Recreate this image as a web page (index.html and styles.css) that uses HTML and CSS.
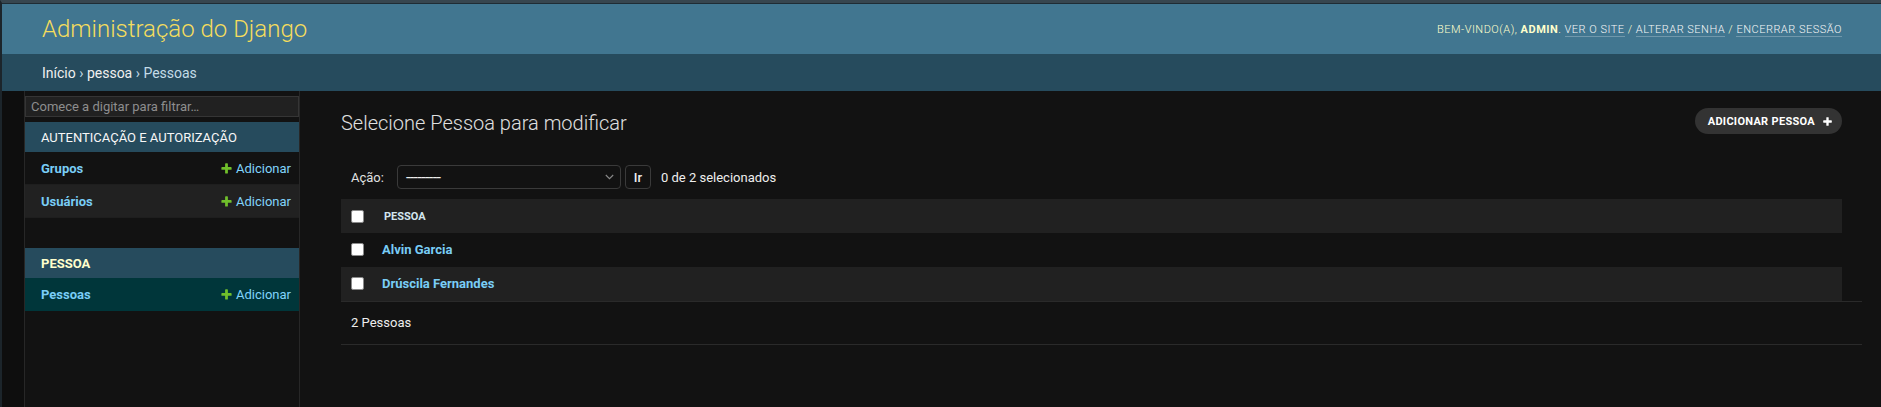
FILE: index.html
```html
<!DOCTYPE html>
<html lang="pt-br">
<head>
<meta charset="utf-8">
<title>Selecione Pessoa para modificar | Administração do Django</title>
<link rel="stylesheet" href="styles.css">
</head>
<body>
<div class="frame">
  <header class="header">
    <div class="branding"><h1 class="site-name">Administração do Django</h1></div>
    <div class="user-tools">Bem-vindo(a), <strong>admin</strong>. <a href="#">Ver o site</a> / <a href="#">Alterar senha</a> / <a href="#">Encerrar sessão</a></div>
  </header>
  <nav class="breadcrumbs"><a href="#">Início</a>&nbsp;›&nbsp;<a href="#">pessoa</a>&nbsp;›&nbsp;Pessoas</nav>
  <div class="main">
    <button class="toggle-nav" aria-label="Alternar navegação"></button>
    <aside class="sidebar">
      <input class="nav-filter" type="search" placeholder="Comece a digitar para filtrar…">
      <div class="app-module">
        <div class="caption"><a href="#">Autenticação e Autorização</a></div>
        <div class="model-row"><a class="model-link" href="#">Grupos</a><a class="addlink" href="#"><svg width="13" height="13" viewBox="0 0 1792 1792"><path fill="#70bf2b" d="M1600 796v192q0 40-28 68t-68 28h-416v416q0 40-28 68t-68 28h-192q-40 0-68-28t-28-68v-416h-416q-40 0-68-28t-28-68v-192q0-40 28-68t68-28h416v-416q0-40 28-68t68-28h192q40 0 68 28t28 68v416h416q40 0 68 28t28 68z"/></svg>Adicionar</a></div>
        <div class="model-row alt"><a class="model-link" href="#">Usuários</a><a class="addlink" href="#"><svg width="13" height="13" viewBox="0 0 1792 1792"><path fill="#70bf2b" d="M1600 796v192q0 40-28 68t-68 28h-416v416q0 40-28 68t-68 28h-192q-40 0-68-28t-28-68v-416h-416q-40 0-68-28t-28-68v-192q0-40 28-68t68-28h416v-416q0-40 28-68t68-28h192q40 0 68 28t28 68v416h416q40 0 68 28t28 68z"/></svg>Adicionar</a></div>
      </div>
      <div class="app-module current-app">
        <div class="caption"><a href="#">Pessoa</a></div>
        <div class="model-row current"><a class="model-link" href="#">Pessoas</a><a class="addlink" href="#"><svg width="13" height="13" viewBox="0 0 1792 1792"><path fill="#70bf2b" d="M1600 796v192q0 40-28 68t-68 28h-416v416q0 40-28 68t-68 28h-192q-40 0-68-28t-28-68v-416h-416q-40 0-68-28t-28-68v-192q0-40 28-68t68-28h416v-416q0-40 28-68t68-28h192q40 0 68 28t28 68v416h416q40 0 68 28t28 68z"/></svg>Adicionar</a></div>
      </div>
    </aside>
    <main class="content">
      <div class="content-head">
        <h1 class="page-title">Selecione Pessoa para modificar</h1>
        <a class="add-btn" href="#">Adicionar Pessoa <svg width="11" height="11" viewBox="0 0 1792 1792"><path fill="#ffffff" d="M1600 796v192q0 40-28 68t-68 28h-416v416q0 40-28 68t-68 28h-192q-40 0-68-28t-28-68v-416h-416q-40 0-68-28t-28-68v-192q0-40 28-68t68-28h416v-416q0-40 28-68t68-28h192q40 0 68 28t28 68v416h416q40 0 68 28t28 68z"/></svg></a>
      </div>
      <div class="actions">
        <span class="action-label">Ação:</span>
        <div class="select-box"><span class="dashes">---------</span><svg width="9" height="6" viewBox="0 0 9 6"><path d="M0.8 1 L4.5 4.7 L8.2 1" fill="none" stroke="#8a8a8a" stroke-width="1.1"/></svg></div>
        <button class="go-btn" type="button">Ir</button>
        <span class="counter">0 de 2 selecionados</span>
      </div>
      <table class="results">
        <thead>
          <tr><th class="cb-col"><input class="cb" type="checkbox"></th><th class="name-col">Pessoa</th></tr>
        </thead>
        <tbody>
          <tr><td class="cb-col"><input class="cb" type="checkbox"></td><td class="name-cell"><a href="#">Alvin Garcia</a></td></tr>
          <tr class="alt"><td class="cb-col"><input class="cb" type="checkbox"></td><td class="name-cell"><a href="#">Drúscila Fernandes</a></td></tr>
        </tbody>
      </table>
      <p class="paginator">2 Pessoas</p>
    </main>
  </div>
</div>
</body>
</html>
```
FILE: styles.css
```css
* { box-sizing: border-box; }
html, body { margin: 0; padding: 0; }
body {
  background: #121212;
  color: #eeeeee;
  font-family: Roboto, "Liberation Sans", Arial, sans-serif;
  font-size: 14px;
}
a { text-decoration: none; }

.frame {
  min-height: 100vh;
  display: flex;
  flex-direction: column;
  border-top: 3px solid #37464f;
  border-left: 2px solid #1c252b;
}

/* header */
.header {
  display: flex;
  justify-content: space-between;
  align-items: center;
  height: 51px;
  padding: 0 39px 0 40px;
  background: #417690;
  border-top: 1px solid #1f2c34;
}
.site-name {
  margin: 0;
  font-size: 24px;
  font-weight: 300;
  line-height: 28px;
  color: #f5dd5d;
}
.user-tools {
  font-size: 11px;
  font-weight: 300;
  letter-spacing: 0.5px;
  text-transform: uppercase;
  color: #ffffcc;
}
.user-tools strong { font-weight: 700; }
.user-tools a {
  color: #f7f7f7;
  border-bottom: 1px solid rgba(255, 255, 255, 0.25);
}

/* breadcrumbs */
.breadcrumbs {
  height: 37px;
  display: flex;
  align-items: center;
  padding: 0 40px;
  background: #264b5d;
  color: #c4dce8;
  font-size: 14px;
}
.breadcrumbs a { color: #f0f0f0; }

/* main */
.main {
  flex: 1;
  display: flex;
}
.toggle-nav {
  flex: 0 0 23px;
  padding: 0;
  border: 0;
  border-right: 1px solid #272727;
  background: #0e0e0e;
}
.sidebar {
  flex: 0 0 275px;
  border-right: 1px solid #272727;
  background: #121212;
}
.nav-filter {
  display: block;
  width: 100%;
  height: 21px;
  margin: 5px 0;
  padding: 2px 5px;
  border: 1px solid #353535;
  background: #212121;
  color: #eeeeee;
  font-family: Roboto, "Liberation Sans", Arial, sans-serif;
  font-size: 13px;
  outline: none;
}
.nav-filter::placeholder { color: #8e8e8e; }

.app-module { margin-bottom: 30px; }
.caption {
  height: 30px;
  display: flex;
  align-items: center;
  padding: 0 16px;
  background: #264b5d;
  font-size: 13px;
  text-transform: uppercase;
}
.caption a { color: #f7f7f7; }
.current-app .caption a { color: #ffffcc; font-weight: 700; }

.model-row {
  height: 33px;
  display: flex;
  justify-content: space-between;
  align-items: center;
  padding: 0 8px 0 16px;
  border-bottom: 1px solid #1e1e1e;
  font-size: 13px;
}
.model-row.alt { background: #212121; }
.model-row.current { background: #00363a; border-bottom-color: #00363a; }
.model-link { color: #79cdf6; font-weight: 700; }
.addlink {
  display: flex;
  align-items: center;
  gap: 3px;
  color: #81d4fa;
}

/* content */
.content {
  flex: 1;
  min-width: 0;
  padding: 20px 39px 20px 41px;
}
.content-head {
  display: flex;
  justify-content: space-between;
  align-items: flex-start;
  margin-bottom: 20px;
}
.page-title {
  margin: 0;
  font-size: 20px;
  font-weight: 300;
  line-height: 24px;
  color: #e0e0e0;
}
.add-btn {
  display: flex;
  align-items: center;
  gap: 7px;
  height: 26px;
  margin-top: -3px;
  padding: 0 9px 0 13px;
  border-radius: 15px;
  background: #333333;
  color: #ffffff;
  font-size: 11px;
  font-weight: 700;
  letter-spacing: 0.3px;
  text-transform: uppercase;
}

.actions {
  display: flex;
  align-items: center;
  height: 44px;
  padding: 10px;
  font-size: 13px;
  color: #e0e0e0;
}
.select-box {
  width: 224px;
  height: 24px;
  margin-left: 13px;
  display: flex;
  align-items: center;
  justify-content: space-between;
  padding: 0 6px 0 8px;
  border: 1px solid #3a3a3a;
  border-radius: 4px;
  background: #121212;
}
.dashes {
  font-size: 16px;
  letter-spacing: -0.6px;
  color: #eeeeee;
}
.go-btn {
  width: 26px;
  height: 24px;
  margin-left: 4px;
  padding: 0;
  border: 1px solid #3a3a3a;
  border-radius: 4px;
  background: #121212;
  color: #eeeeee;
  font-family: Roboto, "Liberation Sans", Arial, sans-serif;
  font-size: 13px;
  font-weight: 500;
}
.counter {
  margin-left: 10px;
  color: #eeeeee;
}

.results {
  width: 100%;
  border-collapse: collapse;
  font-size: 13px;
}
.results th, .results td {
  height: 34px;
  padding: 0;
  vertical-align: middle;
  text-align: left;
}
.results tbody td { padding-bottom: 2px; }
.results thead tr { background: #212121; }
.results tbody tr.alt { background: #212121; }
.cb-col { width: 33px; padding-left: 10px !important; }
.name-col {
  padding-left: 10px !important;
  font-size: 11px;
  font-weight: 700;
  text-transform: uppercase;
  color: #d3e6ef;
}
.name-cell { padding-left: 8px !important; }
.name-cell a { color: #79cdf6; font-weight: 700; }
.cb {
  appearance: none;
  -webkit-appearance: none;
  display: block;
  width: 13px;
  height: 13px;
  margin: 0;
  background: #ffffff;
  border: 1px solid #8a8a8a;
  border-radius: 2px;
}

.paginator {
  margin: 0 -20px 0 0;
  padding: 10px;
  line-height: 22px;
  font-size: 13px;
  color: #eeeeee;
  border-top: 1px solid #2a2a2a;
  border-bottom: 1px solid #2a2a2a;
}
```
